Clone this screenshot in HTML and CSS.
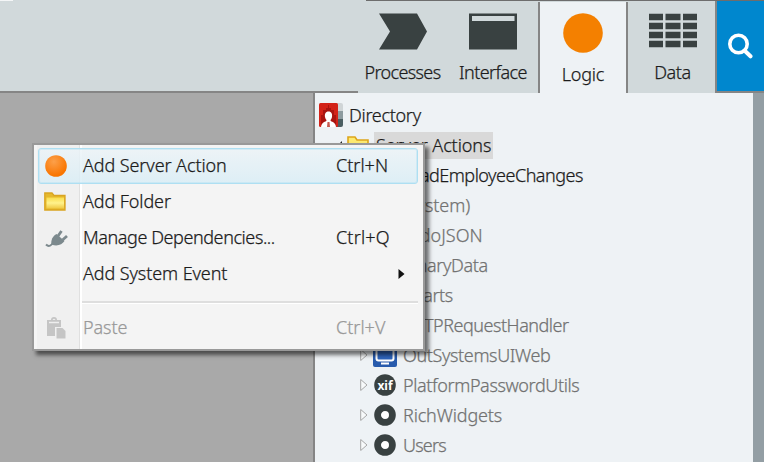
FILE: index.html
```
<!DOCTYPE html>
<html lang="en">
<head>
<meta charset="utf-8">
<title>Directory</title>
<link rel="stylesheet" href="styles.css">
</head>
<body>
<div class="app">
  <header class="toolbar">
    <div class="toolbar-space"></div>
    <nav class="tabs">
      <div class="tab processes"><svg width="48" height="37" viewBox="0 0 48 37"><path d="M0 .5H38L48 18.500L38 36.500H0L11 18.500Z" fill="#394141"/></svg><span>Processes</span></div>
      <div class="tab interface"><svg width="48" height="37" viewBox="0 0 48 37"><path d="M0 .5H48V36.500H0Z" fill="#394141"/><path d="M3 3H45.500V8H3Z" fill="#d1d9db"/></svg><span>Interface</span></div>
      <div class="tab logic"><svg width="40" height="40" viewBox="0 0 40 40"><circle cx="20" cy="20" r="19.800" fill="#f48000"/></svg><span>Logic</span></div>
      <div class="tab data"><svg width="48" height="35" viewBox="0 0 48 35"><path d="M0 4H48M0 13H48M0 22H48M0 31H48" stroke="#394141" stroke-width="6.500" stroke-dasharray="14 2.500 15 2.500 14 3"/></svg><span>Data</span></div>
      <div class="search"><svg width="26" height="26" viewBox="0 0 26 26" fill="none" stroke="#fff"><circle cx="11.500" cy="11" r="8.700" stroke-width="3.600"/><path d="M17.500 17.500L23.500 23.300" stroke-width="4" stroke-linecap="round"/></svg></div>
    </nav>
  </header>
  <main class="work">
    <section class="canvas"></section>
    <aside class="tree">
      <div class="row root"><svg width="24" height="24" viewBox="0 0 24 24"><path d="M18 0H22Q24 0 24 2V8H18Z" fill="#d0d5d7"/><path d="M18 8H24V16H18Z" fill="#8d9b9f"/><path d="M18 16H24V22Q24 24 22 24H18Z" fill="#4b5e62"/><rect width="19" height="24" rx="1.500" fill="#d32218"/><path d="M2 24V12H4V7H7V5H9V2H10V5H12V7H15V12H17V24Z" fill="#a91410"/><path d="M9.500 8.500C6.500 8.500 5.500 11 6 14C6.300 16 7.500 16.500 7.500 17.500C7 19 2.500 18.500 2 24H17C16.500 18.500 12 19 11.500 17.500C11.500 16.500 12.700 16 13 14C13.500 11 12.500 8.500 9.500 8.500Z" fill="#fff"/><path d="M8.500 19H10.500L11 24H8Z" fill="#c85a50"/></svg><span>Directory</span></div>
      <div class="row group"><svg class="open" width="10" height="10" viewBox="0 0 10 10"><path d="M8 1V8H1Z" fill="#222"/></svg><svg width="22" height="20" viewBox="0 0 22 20"><path d="M1 18V2H8L10 5H21V18Z" fill="#fdea70" stroke="#dda51b" stroke-width="1.600"/></svg><span class="selected">Server Actions</span></div>
      <div class="row leaf dark"><span>LoadEmployeeChanges</span></div>
      <div class="row leaf"><span class="system">(System)</span></div>
      <div class="row leaf"><span class="ardo">ArdoJSON</span></div>
      <div class="row leaf"><span class="binary">BinaryData</span></div>
      <div class="row leaf"><span class="charts">Charts</span></div>
      <div class="row leaf"><span class="http">HTTPRequestHandler</span></div>
      <div class="row module"><svg class="closed" width="8" height="12" viewBox="0 0 8 12"><path d="M.7 .5L7 6L.7 11.500Z"/></svg><svg width="24" height="24" viewBox="0 0 24 24"><rect width="24" height="24" rx="2" fill="#285bad"/><rect x="3.500" y="4" width="17" height="13.500" rx="2" fill="#2e64bb" stroke="#fff" stroke-width="2"/><path d="M8 20.500H16" stroke="#fff" stroke-width="2"/></svg><span class="web">OutSystemsUIWeb</span></div>
      <div class="row module"><svg class="closed" width="8" height="12" viewBox="0 0 8 12"><path d="M.7 .5L7 6L.7 11.500Z"/></svg><svg width="24" height="24" viewBox="0 0 24 24"><circle cx="12" cy="12" r="10.800" fill="#394141"/><text class="xif" x="12" y="16.500" text-anchor="middle">xif</text></svg><span class="platform">PlatformPasswordUtils</span></div>
      <div class="row module"><svg class="closed" width="8" height="12" viewBox="0 0 8 12"><path d="M.7 .5L7 6L.7 11.500Z"/></svg><svg width="24" height="24" viewBox="0 0 24 24"><circle cx="12" cy="12" r="7.400" fill="#fff" stroke="#394141" stroke-width="6.800"/></svg><span class="rich">RichWidgets</span></div>
      <div class="row module"><svg class="closed" width="8" height="12" viewBox="0 0 8 12"><path d="M.7 .5L7 6L.7 11.500Z"/></svg><svg width="24" height="24" viewBox="0 0 24 24"><circle cx="12" cy="12" r="7.400" fill="#fff" stroke="#394141" stroke-width="6.800"/></svg><span class="users">Users</span></div>
    </aside>
    <div class="scrollbar"></div>
  </main>
</div>
<div class="menu">
  <div class="item active"><svg width="24" height="24" viewBox="0 0 24 24"><defs><radialGradient id="ball" cx=".4" cy=".3" r=".65"><stop offset="0" stop-color="#fca04a"/><stop offset="1" stop-color="#f97500"/></radialGradient></defs><circle cx="12" cy="12" r="10.800" fill="url(#ball)"/></svg><span>Add Server Action</span><kbd>Ctrl+N</kbd></div>
  <div class="item"><svg width="24" height="24" viewBox="0 0 24 24"><defs><linearGradient id="fold" x2="0" y2="1"><stop offset="0" stop-color="#f9dd4c"/><stop offset=".5" stop-color="#fff28c"/><stop offset="1" stop-color="#efc944"/></linearGradient></defs><path d="M.8 20V3H8L10 5.500H21V20Z" fill="#e5b82d" stroke="#d9a420" stroke-width="1.300"/><path d="M2.500 7.500H20V18.500H2.500Z" fill="url(#fold)"/></svg><span>Add Folder</span></div>
  <div class="item manage"><svg width="24" height="24" viewBox="0 0 24 24"><path d="M2 18.500C5 21.500 7.500 19 9 17" fill="none" stroke="#7c898d" stroke-width="2"/><path d="M7.500 18.500C6.500 14 9 10 12.500 8L20.500 15C18 19 13 20.500 7.500 18.500Z" fill="#7c898d"/><path d="M14 10L17.500 5M18.500 14L23 10" stroke="#7c898d" stroke-width="2.800"/></svg><span>Manage Dependencies...</span><kbd>Ctrl+Q</kbd></div>
  <div class="item"><i></i><span>Add System Event</span><svg class="more" width="7" height="12" viewBox="0 0 7 12"><path d="M.5 1L6.500 6L.5 11Z" fill="#111"/></svg></div>
  <hr>
  <div class="item disabled"><svg width="24" height="24" viewBox="0 0 24 24"><path d="M3 4H7Q7 1 10 1T13 4H17V11H11V20H3Z" fill="#c5c5c5"/><path d="M5 6.500H15" stroke="#eee" stroke-width="1.500"/><path d="M8.500 4Q10 1.500 11.500 4Z" fill="#eee"/><path d="M12.500 12H18.500L21.500 15V22.500H12.500Z" fill="#c5c5c5"/></svg><span>Paste</span><kbd>Ctrl+V</kbd></div>
</div>
</body>
</html>
```

FILE: styles.css
```
* { box-sizing: border-box; }
body { margin: 0; font: 300 18px/30px "Noto Sans", "Open Sans", sans-serif; color: #1c1c1c; -webkit-text-stroke: .25px; }
svg { display: block; flex: none; }
.app { width: 764px; height: 462px; display: flex; flex-direction: column; overflow: hidden; }
.toolbar { height: 93px; display: flex; background: linear-gradient(90deg, #f4f6f7 13px, transparent 13px 366px, #6d6d6d 366px) top / 100% 1px no-repeat #d1d9db; }
.toolbar-space { width: 358px; border-bottom: 2px solid #858585; }
.tabs { flex: 1; display: flex; padding-top: 1px; }
.tab { display: flex; flex-direction: column; align-items: center; }
.tab span { line-height: 24px; letter-spacing: -.65px; white-space: nowrap; }
.processes { width: 90px; padding-top: 12px; }
.interface { width: 90px; padding-top: 12px; }
.processes span, .interface span { margin-top: 10px; }
.processes span { margin-right: 1px; }
.interface span { letter-spacing: -.6px; }
.logic { width: 90px; margin-top: 1px; padding-top: 11px; background: #eef2f5; border: solid #858585; border-width: 0 2px; }
.logic span { margin-top: 9px; letter-spacing: -.2px; }
.data { width: 87px; padding: 12px 0 0 3px; }
.data span { margin: 12px 1px 0 0; letter-spacing: -.4px; }
.search { flex: 1; padding: 32px 0 0 10px; background: #0087ce; border: solid #858585; border-width: 0 0 2px 2px; }
.work { flex: 1; display: flex; min-height: 0; }
.canvas { width: 313px; background: #a9a9a9; }
.tree { flex: 1; padding-top: 7px; background: #eef2f5; border-left: 2px solid #858585; color: #727272; }
.row { height: 30px; display: flex; align-items: center; white-space: nowrap; }
.root { padding-left: 4px; gap: 6px; color: #1c1c1c; letter-spacing: -.3px; }
.group { padding-left: 19px; color: #1c1c1c; letter-spacing: -.1px; }
.group .open { margin-right: 3px; }
.selected { height: 27px; line-height: 27px; margin-left: 5px; padding: 0 2px; background: #d9d9d9; }
.leaf { padding-left: 87px; letter-spacing: -.4px; }
.dark { padding-left: 86px; color: #1c1c1c; letter-spacing: -.5px; }
.system { letter-spacing: -.1px; }
.ardo { letter-spacing: .05px; }
.http { letter-spacing: -.48px; }
.module { padding-left: 45px; }
.closed { margin-right: 5px; fill: #f8fafb; stroke: #a6a6a6; }
.module span { margin-left: 6px; }
.web { letter-spacing: -.38px; }
.platform { letter-spacing: -.38px; }
.rich { letter-spacing: -.15px; }
.users { letter-spacing: -.8px; }
.xif { font: 700 12px "Noto Sans", sans-serif; fill: #fff; -webkit-text-stroke: 0; }
.scrollbar { width: 11px; background: #939ea4; }
.menu { position: absolute; left: 32px; top: 143px; width: 393px; height: 208px; padding: 3px 5px 3px 4px; border: 2px solid #999; background: linear-gradient(90deg, #f5f5f5 3px, #f0f0f0 3px 45px, #e0e0e0 45px 46px, #fff 46px 48px, #f4f4f4 48px); box-shadow: 4px 4px 4px rgba(0, 0, 0, .55); }
.item { height: 36px; display: flex; align-items: center; border: 1px solid transparent; padding: 0 0 0 5px; white-space: nowrap; line-height: 24px; }
.item > i { width: 24px; }
.item span { margin-left: 15px; flex: 1; letter-spacing: -.1px; }
.item span, .item kbd { padding-bottom: 2px; }
.manage span { letter-spacing: -.42px; }
.item kbd { width: 81px; font: inherit; }
.manage kbd { letter-spacing: .15px; }
.active { border: 1px solid #aedff2; border-radius: 3px; background: linear-gradient(rgba(235, 243, 247, .8), rgba(216, 237, 246, .8)); box-shadow: inset 0 0 0 1px rgba(174, 223, 242, .4); }
.more { margin-right: 12px; }
.menu hr { height: 2px; margin: 9px 0 7px 44px; border: 0; background: #dedede; box-shadow: 0 1px #fff; }
.disabled { color: #999; }
```
